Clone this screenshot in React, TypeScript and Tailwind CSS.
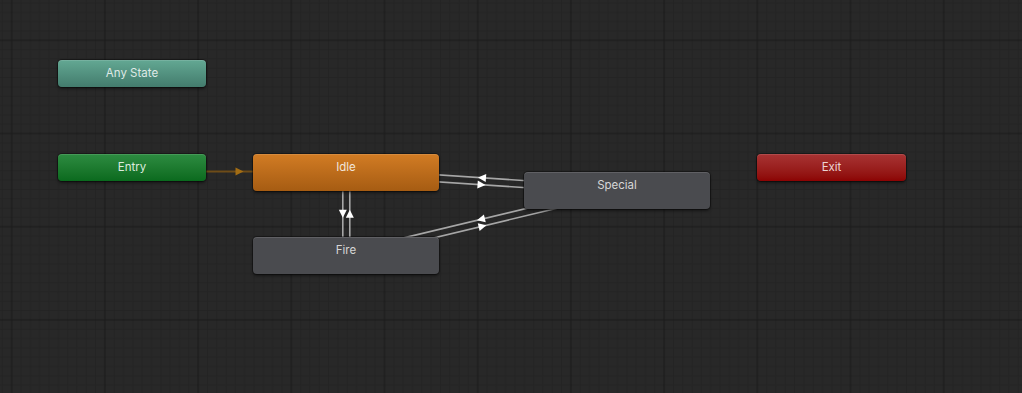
import React from "react";

type P = { x: number; y: number };

const C = {
  idle: { x: 346.3, y: 172.3 },
  fire: { x: 346.3, y: 255.3 },
  special: { x: 617.2, y: 190.2 },
};

function Edge({ a, b }: { a: P; b: P }) {
  const dx = b.x - a.x;
  const dy = b.y - a.y;
  const len = Math.hypot(dx, dy);
  const ux = dx / len;
  const uy = dy / len;
  const ox = -uy * 3.5;
  const oy = ux * 3.5;
  const x1 = a.x + ox;
  const y1 = a.y + oy;
  const x2 = b.x + ox;
  const y2 = b.y + oy;
  const mx = (x1 + x2) / 2;
  const my = (y1 + y2) / 2;
  const L = 8;
  const W = 4;
  const tip = { x: mx + ux * (L / 2), y: my + uy * (L / 2) };
  const bx = mx - ux * (L / 2);
  const by = my - uy * (L / 2);
  const p1 = { x: bx - uy * W, y: by + ux * W };
  const p2 = { x: bx + uy * W, y: by - ux * W };
  return (
    <g>
      <line x1={x1} y1={y1} x2={x2} y2={y2} stroke="#a6a6a6" strokeWidth={1.6} />
      <polygon
        points={`${tip.x},${tip.y} ${p1.x},${p1.y} ${p2.x},${p2.y}`}
        fill="#ffffff"
      />
    </g>
  );
}

const minor = [1, 2, 3, 4, 5, 6, 7, 8, 9].map((i) => i * 9.32);

function Canvas() {
  return (
    <svg
      className="absolute inset-0"
      width={1022}
      height={393}
      viewBox="0 0 1022 393"
    >
      <defs>
        <pattern
          id="grid"
          x={11.7}
          y={40.3}
          width={93.2}
          height={93.2}
          patternUnits="userSpaceOnUse"
        >
          <rect x={0} y={0} width={93.2} height={93.2} fill="#282828" />
          {minor.map((m) => (
            <rect key={"v" + m} x={m - 0.5} y={0} width={1} height={93.2} fill="#232323" />
          ))}
          {minor.map((m) => (
            <rect key={"h" + m} x={0} y={m - 0.5} width={93.2} height={1} fill="#232323" />
          ))}
          <rect x={-0.6} y={0} width={1.2} height={93.2} fill="#1b1b1b" />
          <rect x={0} y={-0.6} width={93.2} height={1.2} fill="#1b1b1b" />
          <rect x={92.6} y={0} width={1.2} height={93.2} fill="#1b1b1b" />
          <rect x={0} y={92.6} width={93.2} height={1.2} fill="#1b1b1b" />
        </pattern>
      </defs>
      <rect x={0} y={0} width={1022} height={393} fill="url(#grid)" />

      {/* Entry -> Idle */}
      <line x1={206} y1={171.6} x2={253} y2={171.6} stroke="#6e4c18" strokeWidth={2} />
      <polygon points="243.5,171.6 235.5,167.6 235.5,175.6" fill="#a36d14" />

      <Edge a={C.idle} b={C.fire} />
      <Edge a={C.fire} b={C.idle} />
      <Edge a={C.idle} b={C.special} />
      <Edge a={C.special} b={C.idle} />
      <Edge a={C.fire} b={C.special} />
      <Edge a={C.special} b={C.fire} />
    </svg>
  );
}

const nodeBase =
  "absolute rounded-[4px] flex justify-center pt-[6px] text-[11.5px] leading-[14px] font-['Inter','Noto_Sans',sans-serif] shadow-[inset_0_1px_0_rgba(255,255,255,0.12),0_0_0_1px_rgba(0,0,0,0.35),0_2px_3px_rgba(0,0,0,0.45)]";

export default function App() {
  return (
    <div className="relative w-[1022px] h-[393px] overflow-hidden bg-[#282828]">
      <Canvas />

      <div
        className={`${nodeBase} left-[58px] top-[60px] w-[148px] h-[27px] bg-linear-to-b from-[#63a893] to-[#437c6d] text-[#dfe9e6]`}
      >
        Any State
      </div>

      <div
        className={`${nodeBase} left-[58px] top-[154px] w-[148px] h-[27px] bg-linear-to-b from-[#2d8c41] to-[#0a6a1e] text-[#dcebdf]`}
      >
        Entry
      </div>

      <div
        className={`${nodeBase} left-[757px] top-[154px] w-[149px] h-[27px] bg-linear-to-b from-[#a83333] to-[#8c0303] text-[#ecd4d4]`}
      >
        Exit
      </div>

      <div
        className={`${nodeBase} left-[253px] top-[154px] w-[186px] h-[37px] bg-linear-to-b from-[#d27c24] to-[#a65c12] text-[#f2e6da]`}
      >
        Idle
      </div>

      <div
        className={`${nodeBase} left-[253px] top-[237px] w-[186px] h-[37px] bg-[#4a4b4f] text-[#d6d6d6]`}
      >
        Fire
      </div>

      <div
        className={`${nodeBase} left-[524px] top-[172px] w-[186px] h-[37px] bg-[#4a4b4f] text-[#d6d6d6]`}
      >
        Special
      </div>
    </div>
  );
}
